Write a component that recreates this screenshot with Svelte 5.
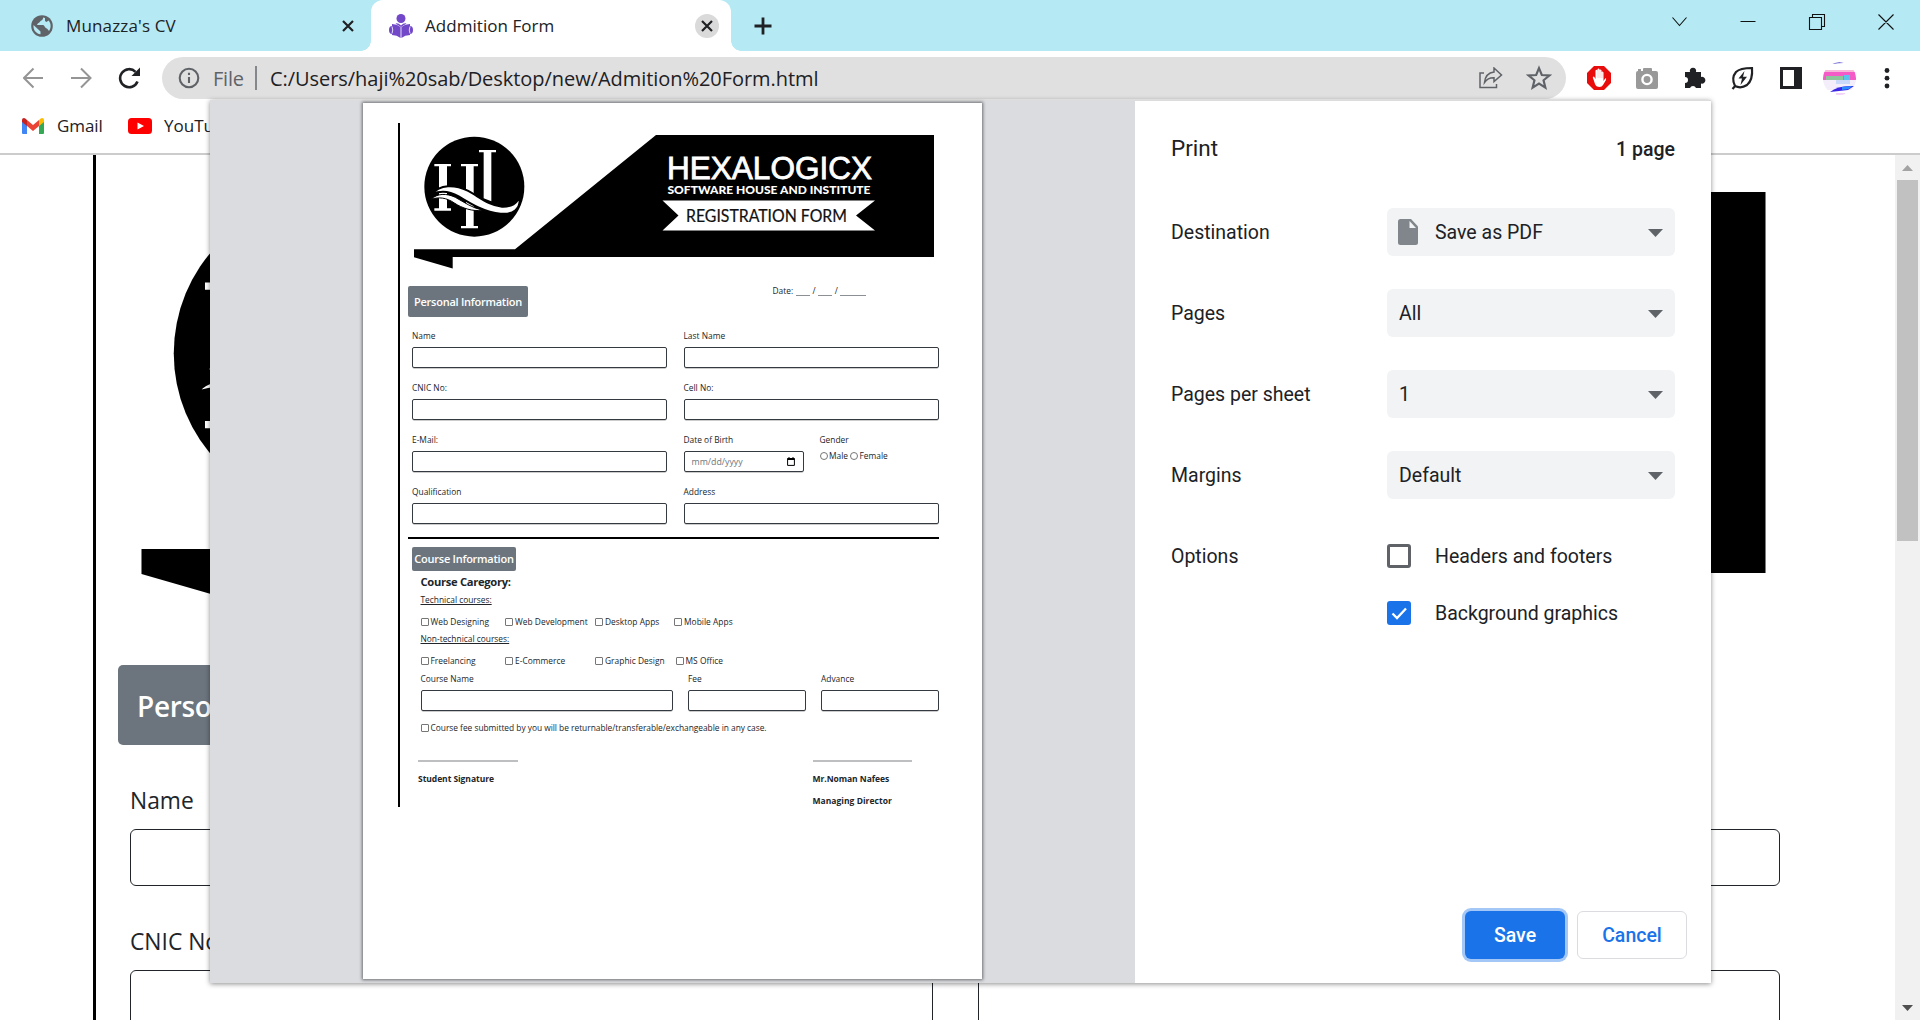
<script>
  const leftFields = ['Name', 'CNIC No:', 'E-Mail:', 'Qualification'];
  const technical = ['Web Designing', 'Web Development', 'Desktop Apps', 'Mobile Apps'];
  const nonTechnical = ['Freelancing', 'E-Commerce', 'Graphic Design', 'MS Office'];
  const settings = [
    { label: 'Destination', value: 'Save as PDF', doc: true },
    { label: 'Pages', value: 'All' },
    { label: 'Pages per sheet', value: '1' },
    { label: 'Margins', value: 'Default' }
  ];
</script>

{#snippet banner(cls, titled)}
  <svg class={cls} viewBox="414 135 520 134">
    <path d="M656 135H934V257H452.700V268.500L414 257.300V249.300H515Z" />
    {#if titled}
      <path d="M662.500 200.500H875L856 215.500L875 230.500H662.500L678.500 215.500Z" fill="#fff" />
      <text class="brand" x="667" y="178.700" textLength="205" lengthAdjust="spacingAndGlyphs">HEXALOGICX</text>
      <text class="tagline" x="667.500" y="193.500" textLength="203" lengthAdjust="spacingAndGlyphs">SOFTWARE HOUSE AND INSTITUTE</text>
      <text class="ribbon" x="686" y="221.700" textLength="161" lengthAdjust="spacingAndGlyphs">REGISTRATION FORM</text>
    {/if}
    <g transform="translate(400 120) scale(.33333)">
      <circle cx="223" cy="200" r="150" />
      <g fill="#fff">
        <path d="M103 132h50v7h-12v126h12v7h-50v-7h14V139h-14z" />
        <path d="M183 132h51v7h-13v179h13v7h-51v-7h15V139h-15z" />
        <path d="M237 90h51v7h-14v147l-23-9V97h-14z" />
      </g>
      <path d="M94 238C110 220 140 219 166 232C195 248 215 263 246 270C220 276 185 264 163 249C140 233 116 230 94 238Z" fill="#fff" stroke="#000" stroke-width="3" />
      <path d="M97 222C118 192 165 193 203 212C240 232 268 257 306 260C334 261 353 250 357 230C366 266 338 285 302 281C255 277 213 252 176 229C150 214 122 211 97 222Z" fill="#fff" stroke="#000" stroke-width="6" />
    </g>
  </svg>
{/snippet}

{#snippet field(label, cls = '')}
  <div class="field {cls}"><span class="label">{label}</span><div class="box"></div></div>
{/snippet}

{#snippet check(text)}
  <span class="check"><i class="tick"></i><span>{text}</span></span>
{/snippet}

<div class="window">
  <header class="tabs">
    <div class="tab first">
      <svg class="globe" viewBox="0 0 22 22"><circle cx="11" cy="11" r="10.800" fill="#5f6368" /><path d="M2.500 10L9.500 16.500V19.300C5 18.600 2 15 2.500 10ZM12 2.500C12.500 5 10 5.500 9 6.500C8.500 8 6.500 8 6 10H12C14 10.500 13.500 13 16 13.500L18 16C20.500 12.500 20 8 17.500 5.500L15.500 7L14 6V3Z" fill="#b5e9f3" /></svg>
      <span class="tabname one">Munazza's CV</span>
      <svg class="x" viewBox="0 0 12 12"><path d="M1 1L11 11M11 1L1 11" /></svg>
    </div>
    <div class="tab active">
      <svg class="reader" viewBox="0 0 24 24"><g fill="#7248c8"><circle cx="12" cy="4.500" r="4.500" /><path d="M6.500 9.500Q9 8.500 12 11.500Q15 8.500 17.500 9.500L12 13Z" /><path d="M3 10Q8 10 11.600 13V24Q8 21 3 21ZM21 10Q16 10 12.400 13V24Q16 21 21 21Z" /><path d="M3 12Q0 12 0 16T3 20ZM21 12Q24 12 24 16T21 20Z" /></g><path d="M3 12.500Q4.500 16 3 19.500M21 12.500Q19.500 16 21 19.500" fill="none" stroke="#e4dcf5" stroke-width="1" /></svg>
      <span class="tabname two">Addmition Form</span>
      <span class="closer"><svg class="x" viewBox="0 0 12 12"><path d="M1 1L11 11M11 1L1 11" /></svg></span>
    </div>
    <svg class="plus" viewBox="0 0 18 18"><path d="M9 0.500V17.500M0.500 9H17.500" stroke="#202124" stroke-width="2.800" /></svg>
    <svg class="controls" viewBox="0 0 222 16" fill="none" stroke="#111" stroke-width="1.100"><path d="M.5 3.500L7.500 11.500L14.500 3.500M68.500 7.500H83.500M137.500 3.500H149.500V15.500H137.500ZM140.500 3.500V.5H152.500V12.500H149.500M206.500 .5L221.500 15.500M221.500 .5L206.500 15.500" /></svg>
  </header>

  <div class="toolbar">
    <svg class="nav" viewBox="0 0 117 22" fill="none" stroke-width="2">
      <path d="M20 11H1.500M10.500 1.500L1 11L10.500 20.500M48 11H66.500M58 1.500L67.500 11L58 20.500" stroke="#959595" />
      <path d="M114.500 14.500A9 9 0 1 1 112.500 4.800" stroke="#202124" stroke-width="2.600" /><path d="M117 .5V9H108.500Z" fill="#202124" />
    </svg>
    <div class="omnibox">
      <svg class="info" viewBox="0 0 22 22" fill="none" stroke="#5f6368" stroke-width="2.100"><circle cx="11" cy="11" r="9.300" /><path d="M11 10V16M11 5.800V8" /></svg>
      <span class="scheme">File</span><i class="bar"></i>
      <span class="url">C:/Users/haji%20sab/Desktop/new/Admition%20Form.html</span>
      <svg class="share" viewBox="0 0 24 22" fill="none" stroke="#5f6368" stroke-width="1.500"><path d="M5 6H1V20.500H17.500V17M15 1L22.500 8L15 14.500V10.800Q9 10.500 5.500 15.500Q6.500 6 15 5Z" /></svg>
      <svg class="star" viewBox="0 0 24 24"><path d="M12 2.800L14.600 9.200L21.500 9.700L16.200 14.100L17.900 20.900L12 17.200L6.100 20.900L7.800 14.100L2.500 9.700L9.400 9.200Z" fill="none" stroke="#5f6368" stroke-width="2" /></svg>
    </div>
    <svg class="exts" viewBox="0 0 310 36">
      <path d="M8 6H18L25 13V23L18 30H8L1 23V13Z" fill="#e80c0c" />
      <path d="M8 19.500Q6.500 16.500 8.500 16.500L10 19V10.500Q11 9.200 12 10.500V9Q13 8 14 9V10Q15 9 16 10.200V12Q17 11 18 12.500V21L20 18Q21 18 20.500 20L17.500 25Q16.500 27 14 27Q10.500 27 9.500 24Z" fill="#fff" transform="translate(-.5 0)" />
      <path d="M12 10V18M14 10V18M16 12V18" stroke="#f0a0a0" stroke-width=".5" />
      <g fill="#999"><rect x="50" y="11" width="22" height="18" rx="2" /><rect x="57" y="8" width="9" height="5" rx="1" /><rect x="52" y="9" width="3" height="3" /></g><circle cx="61" cy="19.500" r="4.600" fill="#999" stroke="#fff" stroke-width="2.400" />
      <path d="M99 12H104A3.200 3.200 0 1 1 110 12H115V17A3.400 3.400 0 1 1 115 23.500V28H110A3.200 3.200 0 0 0 104 28H99V23A3 3 0 0 0 99 17Z" fill="#202124" />
      <path d="M149 26Q145 18 150 12Q154 8 166 8Q167 20 161 25Q155 29 149 26ZM150 25L146.500 29" fill="none" stroke="#202124" stroke-width="2.200" /><path d="M158.500 11L152.500 18.500H156L154.500 25L161 16.800H157Z" fill="#202124" />
      <path d="M194 7H216V29H194ZM197 10V26H208V10Z" fill="#202124" fill-rule="evenodd" />
      <clipPath id="face"><circle cx="253.500" cy="18.500" r="16.500" /></clipPath>
      <g clip-path="url(#face)"><path d="M236 18H272V30H236Z" fill="#f3eefa" /><path d="M236 12H272V20H236Z" fill="#f45bc6" /><path d="M236 10H272V12H236Z" fill="#f6b8d8" /><path d="M240 16H257V20H240Z" fill="#8fc59a" /><path d="M258 15H264V20H258Z" fill="#5ac4ee" /><path d="M250 20H264V24H250Z" fill="#c9d9fa" /><path d="M244 32Q252 25 268 26L262 30Z" fill="#3a25e5" /><path d="M256 27L266 26L263 29L256 30Z" fill="#2a8bff" /><path d="M246 4Q252 1 258 3Q252 3 246 4Z" fill="#5148c8" /><path d="M250 34H259" stroke="#e3a5f0" /></g>
      <g fill="#202124"><circle cx="301" cy="10.500" r="2.400" /><circle cx="301" cy="18.200" r="2.400" /><circle cx="301" cy="26" r="2.400" /></g>
    </svg>
  </div>

  <div class="bookmarks">
    <svg class="gmail" viewBox="0 0 22 16"><path d="M0 2V15Q0 16 1 16H5V6Z" fill="#4285f4" /><path d="M22 2V15Q22 16 21 16H17V6Z" fill="#34a853" /><path d="M5 2L11 7L17 2V8L11 13L5 8Z" fill="#ea4335" /><path d="M0 2Q0 0 2 0Q3 0 5 2V8L0 4Z" fill="#c5221f" /><path d="M22 2Q22 0 20 0Q19 0 17 2V8L22 4Z" fill="#fbbc04" /></svg>
    <span class="bm g">Gmail</span>
    <svg class="yt" viewBox="0 0 24 16"><rect width="24" height="16" rx="3.500" fill="#f00" /><path d="M9.500 4.500L16 8L9.500 11.500Z" fill="#fff" /></svg>
    <span class="bm">YouTube</span>
  </div>

  <main>
    <div class="sheet">
      {@render banner('bigbanner', false)}
      <div class="bigbadge">Personal</div>
      <div class="biggrid">
        {#each ['Name', '', 'CNIC No:', ''] as l}
          <div class="bigfield"><span>{l}</span><div class="bigbox"></div></div>
        {/each}
      </div>
    </div>
    <div class="scroll">
      <svg viewBox="0 0 11 6"><path d="M0 6L5.500 0L11 6Z" fill="#a3a3a3" /></svg>
      <div class="thumb"></div>
      <svg class="down" viewBox="0 0 11 6"><path d="M0 0H11L5.500 6Z" fill="#505050" /></svg>
    </div>
  </main>

  <div class="dialog">
    <div class="preview">
      <div class="paper">
        <div class="form">
          {@render banner('banner', true)}
          <div class="formhead"><div class="badge">Personal Information</div>
            <span class="date">Date: <i class="blank"></i> / <i class="blank"></i> / <i class="blank long"></i></span></div>
          <div class="grid">
            {@render field(leftFields[0])}
            {@render field('Last Name')}
            {@render field(leftFields[1])}
            {@render field('Cell No:')}
            {@render field(leftFields[2])}
            <div class="split">
              <div class="field dob"><span class="label">Date of Birth</span>
                <div class="box datebox"><span>mm/dd/yyyy</span><svg viewBox="0 0 8 9"><path d="M.6 1.500H7.400V8.400H.6Z" fill="none" stroke="#000" /><path d="M.5 1.200H7.500V3H.5ZM1.500 0h1v2h-1zM5.500 0h1v2h-1z" /></svg></div>
              </div>
              <div class="gender"><span class="label">Gender</span><div class="radios"><i></i><span class="male">Male</span><i></i><span>Female</span></div></div>
            </div>
            {@render field(leftFields[3])}
            {@render field('Address')}
          </div>
          <div class="rule"></div>
          <div class="badge course">Course Information</div>
          <div class="courses">
            <h3>Course Caregory:</h3>
            <u>Technical courses:</u>
            <div class="checks">{#each technical as t}{@render check(t)}{/each}</div>
            <u class="non">Non-technical courses:</u>
            <div class="checks second">{#each nonTechnical as t}{@render check(t)}{/each}</div>
            <div class="fees">{@render field('Course Name', 'wide')}{@render field('Fee')}{@render field('Advance')}</div>
            <div class="agree">{@render check('Course fee submitted by you will be returnable/transferable/exchangeable in any case.')}</div>
          </div>
          <div class="signs">
            <div class="sign"><i></i><b class="student">Student Signature</b></div>
            <div class="sign"><i></i><b>Mr.Noman Nafees</b><b class="md">Managing Director</b></div>
          </div>
        </div>
      </div>
    </div>
    <aside>
      <div class="top"><h2>Print</h2><b>1 page</b></div>
      {#each settings as s}
        <div class="setting"><span>{s.label}</span>
          <div class="select">
            {#if s.doc}<svg class="doc" viewBox="0 0 20 26"><path d="M2.500 0H13L20 7.500V23.500Q20 26 17.500 26H2.500Q0 26 0 23.500V2.500Q0 0 2.500 0Z" fill="#80868b" /><path d="M11.500 2V9H18Z" fill="#f1f3f4" /></svg>{/if}
            <span>{s.value}</span>
            <svg class="arrow" viewBox="0 0 15 8"><path d="M0 0H15L7.500 8Z" fill="#5f6368" /></svg>
          </div>
        </div>
      {/each}
      <div class="options"><span>Options</span>
        <div>
          <div class="opt"><i class="cb"></i><span>Headers and footers</span></div>
          <div class="opt"><i class="cb on"><svg viewBox="0 0 24 24"><path d="M5.500 12.500L10 17L19 7.500" fill="none" stroke="#fff" stroke-width="2.300" /></svg></i><span>Background graphics</span></div>
        </div>
      </div>
      <div class="buttons"><button class="save">Save</button><button class="cancel">Cancel</button></div>
    </aside>
  </div>
</div>

<style>
  :global(body) { margin: 0; overflow: hidden; }
  * { box-sizing: border-box; }
  svg { display: block; flex: none; }
  .window { position: relative; width: 1920px; height: 1020px; overflow: hidden; background: #fff; display: flex; flex-direction: column; font-family: 'Open Sans', 'Noto Sans', sans-serif; color: #212529; white-space: nowrap; }
  .tabs { height: 51px; flex: none; background: #b5e9f3; display: flex; align-items: center; }
  .tab { display: flex; align-items: center; height: 51px; flex: none; }
  .first { width: 371px; padding: 0 17px 0 31px; border-bottom-right-radius: 10px; }
  .globe { width: 22px; height: 22px; margin-right: 13px; }
  .tabname { font-size: 17px; color: #202124; flex: 1; }
  .one { letter-spacing: .15px; }
  .two { letter-spacing: .05px; }
  .x { width: 12px; height: 12px; stroke: #202124; stroke-width: 2.200; fill: none; }
  .active { position: relative; width: 360px; background: #fff; border-radius: 12px 12px 0 0; padding: 0 12px 0 18px; }
  .active::before, .active::after { content: ''; position: absolute; bottom: 0; width: 10px; height: 10px; }
  .active::before { left: -10px; background: radial-gradient(circle at 0 0, transparent 9.500px, #fff 10px); }
  .active::after { right: -10px; background: radial-gradient(circle at 100% 0, transparent 9.500px, #fff 10px); }
  .reader { width: 24px; height: 24px; margin: 1px 12px 0 0; }
  .closer { width: 24px; height: 24px; border-radius: 50%; background: #dadada; display: grid; place-items: center; }
  .plus { width: 18px; height: 18px; margin-left: 23px; }
  .controls { width: 222px; height: 16px; margin: -7px 26px 0 auto; }
  .toolbar { height: 49px; flex: none; display: flex; align-items: flex-start; padding: 6px 0 0 23px; }
  .nav { width: 117px; height: 22px; margin: 10px 22px 0 0; }
  .omnibox { width: 1404px; height: 42px; border-radius: 21px; background: #e0e0e0; display: flex; align-items: center; padding: 0 14px 0 16px; font-size: 20px; }
  .info { width: 22px; height: 22px; }
  .scheme { color: #5f6368; margin-left: 13px; width: 42px; letter-spacing: -.2px; }
  .bar { width: 1.500px; height: 24px; background: #85888b; margin-right: 13.500px; }
  .url { flex: 1; color: #202124; letter-spacing: -.05px; }
  .share { width: 24px; height: 22px; margin-right: 23px; }
  .star { width: 26px; height: 26px; }
  .exts { width: 310px; height: 36px; margin: 3px 0 0 20px; }
  .bookmarks { height: 55px; flex: none; border-bottom: 2px solid #ccc; display: flex; padding: 14px 0 0 22px; }
  .gmail { width: 22px; height: 16px; margin: 4px 13px 0 0; }
  .yt { width: 24px; height: 16px; margin: 4px 12px 0 0; }
  .bm { font-size: 17px; line-height: 23px; color: #202124; }
  .g { width: 71px; letter-spacing: -.1px; }
  main { flex: 1; min-height: 0; display: flex; justify-content: space-between; }
  .sheet { margin-left: 93px; width: 1720px; border-left: 3px solid #000; padding: 37px 0 0 22px; height: 865px; overflow: hidden; }
  .bigbanner { width: 1625px; height: 418.500px; margin-left: 23px; }
  .bigbadge { width: 420px; height: 80px; margin-top: 54px; background: #6c757d; border-radius: 5px; color: #fff; font: 600 28px/82px 'Open Sans', sans-serif; padding-left: 19px; letter-spacing: -.3px; }
  .biggrid { display: grid; grid-template-columns: 803px 802px; column-gap: 45px; row-gap: 27px; margin: 38px 0 0 12px; }
  .bigfield { font-size: 22.800px; line-height: 36px; height: 114px; }
  .bigfield span { display: block; height: 46px; }
  .bigbox { height: 57px; border: 1px solid #212529; border-radius: 6px; }
  .scroll { width: 25px; background: #f1f1f1; display: flex; flex-direction: column; align-items: center; padding: 10px 0 9px; }
  .scroll svg { width: 11px; height: 6px; }
  .thumb { width: 21px; height: 361px; background: #c1c1c1; margin-top: 9px; }
  .scroll .down { margin-top: auto; }

  .dialog { position: absolute; left: 210px; top: 100px; width: 1501px; height: 883px; display: flex; background: #fff; border-top: 1px solid #dcdcde; box-shadow: 0 1px 5px rgba(0, 0, 0, .45); }
  .preview { width: 925px; background: #dadce0; padding: 2px 0 0 153px; }
  .paper { width: 619px; height: 876px; background: #fff; box-shadow: 0 0 3px 1px rgba(0, 0, 0, .5); padding: 20px 0 0 35px; }
  .form { width: 560px; height: 684px; border-left: 2.400px solid #000; padding: 12px 0 0 8px; font-size: 8.400px; line-height: 14px; }
  .banner { width: 520px; height: 134px; margin-left: 5.500px; }
  .brand { font: 31.500px 'Liberation Sans', sans-serif; fill: #fff; stroke: #fff; stroke-width: .8; }
  .tagline { font: 900 12px Lato, sans-serif; fill: #fff; }
  .ribbon { font: 16.300px Lato, sans-serif; fill: #111; stroke: #111; stroke-width: .2; }
  .formhead { display: flex; margin-top: 17px; height: 31px; }
  .badge { width: 120px; height: 31px; border-radius: 2px; background: #6c757d; color: #fff; font: 600 11px/32px 'Open Sans', sans-serif; text-align: center; letter-spacing: -.25px; }
  .date { margin: -2px 0 0 244.500px; word-spacing: .2px; }
  .blank { display: inline-block; width: 14.500px; height: 1px; background: #8c9094; vertical-align: -2px; }
  .long { width: 26px; }
  .grid { display: grid; grid-template-columns: 255px 255px; column-gap: 16.500px; row-gap: 12px; margin: 11px 0 0 4px; }
  .label { display: block; height: 14px; margin-bottom: 5px; line-height: 16px; }
  .box { height: 21px; border: 1px solid #343a40; border-radius: 2px; box-shadow: 0 .5px .5px rgba(0, 0, 0, .4); }
  .split { display: flex; gap: 16px; height: 40px; }
  .dob { width: 120px; }
  .datebox { display: flex; justify-content: space-between; align-items: center; padding: 0 8px 0 7px; color: #6c757d; font-size: 8.800px; }
  .datebox svg { width: 8px; height: 9px; }
  .gender .label { margin-bottom: 3px; }
  .radios { display: flex; align-items: center; height: 14px; }
  .radios i { width: 8px; height: 8px; border: 1px solid #767676; border-radius: 50%; margin-right: 1.500px; }
  .male { width: 21px; }
  .rule { width: 531px; height: 2.500px; background: #000; margin-top: 12.800px; }
  .course { width: 104px; height: 24px; line-height: 24px; margin: 7.700px 0 0 4px; }
  .courses { margin: 1px 0 0 12.500px; }
  h3 { margin: 0; font-size: 11.200px; line-height: 20px; height: 18px; font-weight: 700; letter-spacing: -.3px; }
  u { display: block; height: 14px; margin-top: 3px; line-height: 14px; text-underline-offset: 1px; }
  .checks { display: grid; grid-template-columns: 84.500px 90px 79px 80px; margin-top: 8px; height: 14px; }
  .second { grid-template-columns: 84.500px 90px 80.500px 80px; }
  .check { display: flex; align-items: center; letter-spacing: .03px; }
  .tick { width: 8px; height: 8px; border: 1px solid #767676; border-radius: 1px; margin: 0 2px 0 0; flex: none; }
  .fees { display: grid; grid-template-columns: 252px 117.500px 118px; gap: 15.500px; margin-top: 3px; }
  .agree { margin-top: 10px; height: 14px; }
  .agree .check { letter-spacing: -.02px; }
  .signs { display: flex; gap: 295px; margin: 25px 0 0 10px; }
  .sign { width: 99.500px; display: flex; flex-direction: column; }
  .sign i { height: 2px; background: #bdbfc1; margin-bottom: 10px; }
  .sign b { color: #212529; font-size: 8.500px; letter-spacing: -.05px; }
  .sign .md { margin-top: 8px; letter-spacing: .03px; }

  aside { flex: 1; padding: 0 36px 0 36px; font: 19.500px Roboto, sans-serif; color: #202124; display: flex; flex-direction: column; }
  .top { display: flex; justify-content: space-between; align-items: center; height: 28px; margin: 34px 0 45px; }
  h2 { margin: -2px 0 0; font-size: 22.500px; font-weight: 400; }
  .top b { font-weight: 500; }
  .setting { display: flex; height: 48px; align-items: center; margin-bottom: 33px; }
  .setting > span, .options > span { width: 216px; }
  .select { width: 288px; height: 48px; background: #f1f3f4; border-radius: 6px; display: flex; align-items: center; padding: 0 12px; }
  .select span { flex: 1; }
  .doc { width: 20px; height: 26px; margin: 0 17px 0 -1px; }
  .arrow { width: 15px; height: 8px; margin-top: 2px; }
  .options { display: flex; line-height: 26px; margin-top: 12px; }
  .opt { display: flex; gap: 24px; height: 24px; margin-bottom: 33px; }
  .cb { width: 24px; height: 24px; border: 3px solid #5f6368; border-radius: 3px; }
  .on { border: 0; background: #1a73e8; }
  .buttons { display: flex; justify-content: flex-end; gap: 12px; margin: auto -12px 24px 0; }
  button { height: 48px; border-radius: 6px; font: 500 19.500px Roboto, sans-serif; padding: 0; }
  .save { width: 100px; border: 0; background: #1a73e8; color: #fff; box-shadow: 0 0 0 3px #a3c7f6; }
  .cancel { width: 110px; border: 1px solid #dadce0; background: #fff; color: #1a73e8; }
</style>
